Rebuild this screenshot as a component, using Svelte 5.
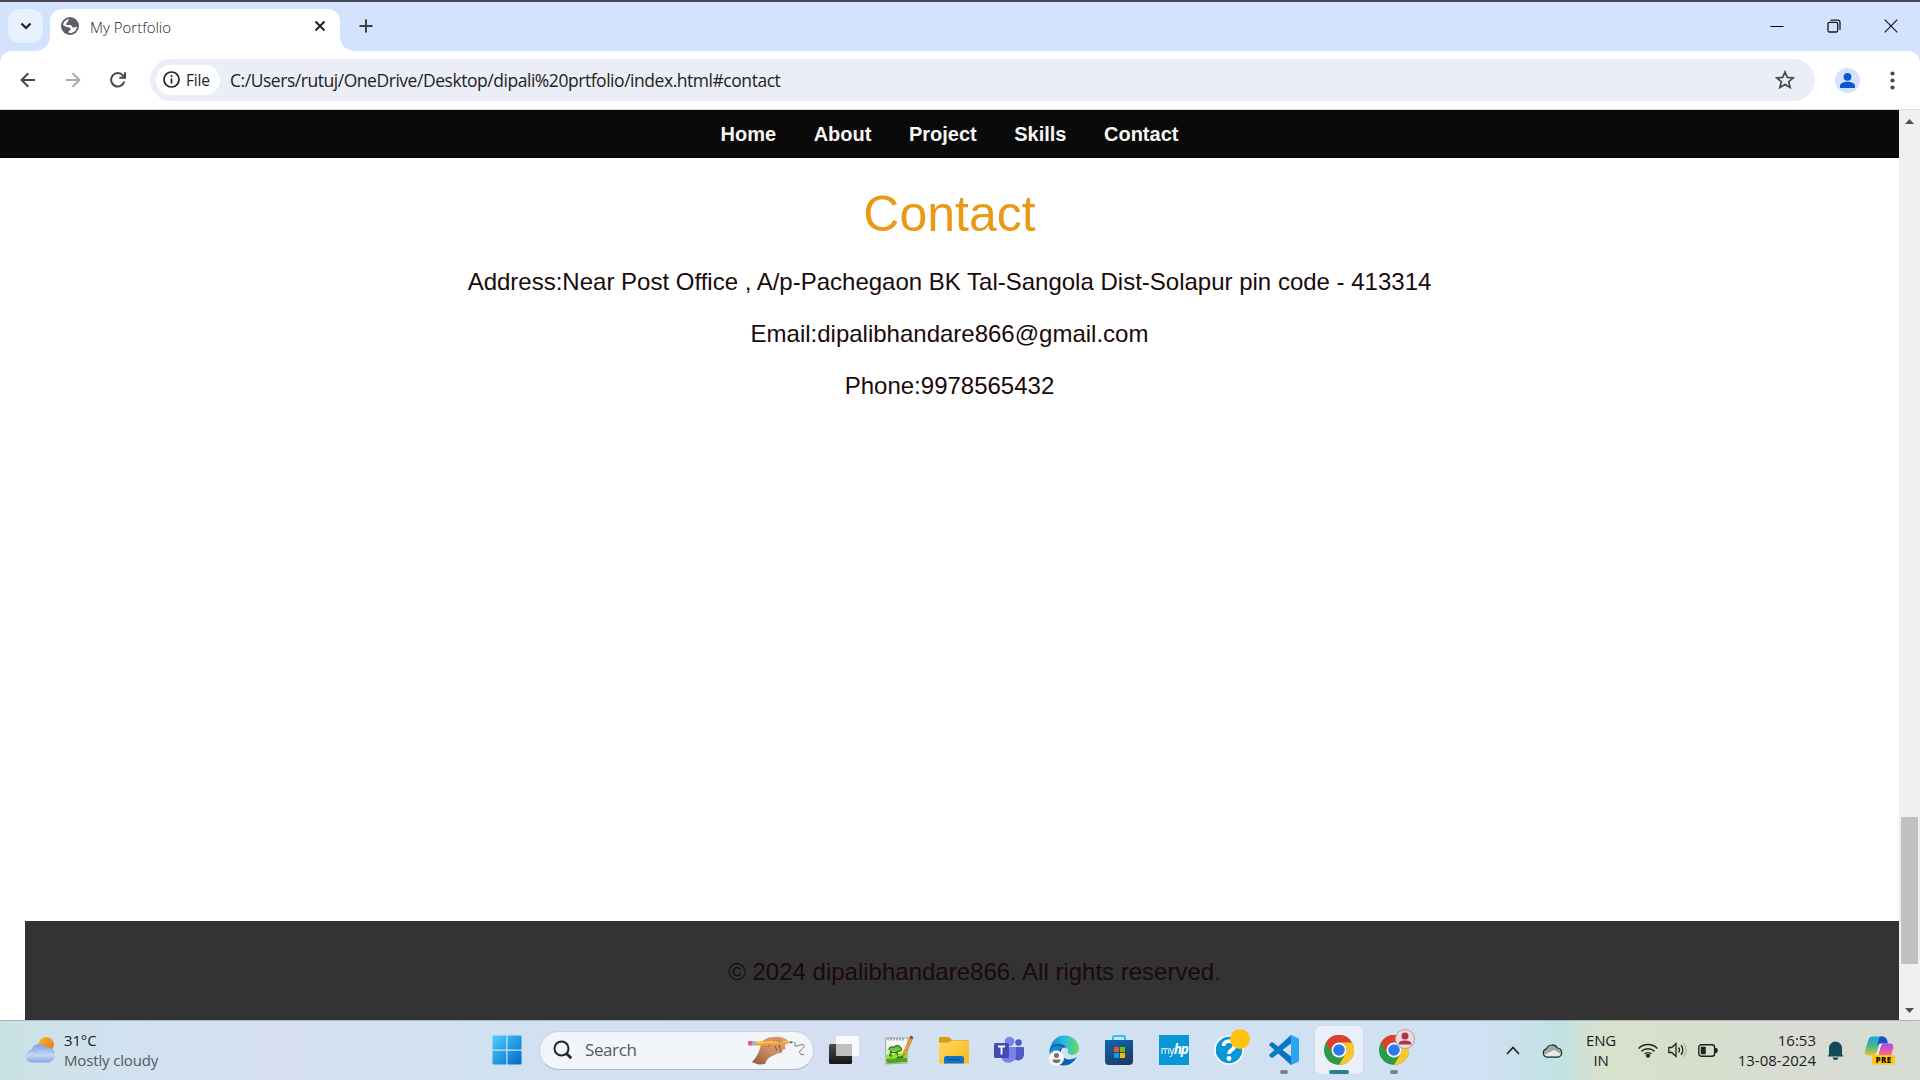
<script>
  const links = ['Home', 'About', 'Project', 'Skills', 'Contact'];
  const details = [
    'Address:Near Post Office , A/p-Pachegaon BK Tal-Sangola Dist-Solapur pin code - 413314',
    'Email:dipalibhandare866@gmail.com',
    'Phone:9978565432'
  ];
</script>

{#snippet chrome()}
  <circle cx="15" cy="15" r="15" fill="#2c9b48" />
  <path d="M2 7.5A15 15 0 0 1 28 7.5H15A7.5 7.5 0 0 0 8.5 18.7Z" fill="#e33b2e" />
  <path d="M28 7.5A15 15 0 0 1 15 30L21.5 18.7A7.5 7.5 0 0 0 15 7.5Z" fill="#fcc62b" />
  <circle cx="15" cy="15" r="7.5" fill="#fff" />
  <circle cx="15" cy="15" r="5.8" fill="#2d78ea" />
{/snippet}

<div class="screen">
  <header class="tabs">
    <button class="drop" aria-label="Search tabs">
      <svg width="12" height="8" viewBox="0 0 12 8"><path d="M1.5 1.5 6 6l4.5-4.5" fill="none" stroke="#1d1f23" stroke-width="2.2" /></svg>
    </button>
    <div class="tab">
      <svg width="18" height="18" viewBox="0 0 18 18">
        <circle cx="9" cy="9" r="9" fill="#5b5e64" />
        <path d="M10.5 2C7.500 2 7 3 7 4.500S5 5.500 5 7c0 1.500 2.500.8 4.300 1 1.700.2 1.400 2.500 3 2.500s2-.6 3.700-.8c-.4 3.800-3.200 6.300-7 6.300-1 0-1.500-.4-1.300-1.500.2-1.200 1.900-.9 1.900-2.300 0-1.700-1.800-2-3.600-2.200C4.500 9.800 4 8.800 2.100 8.300 2.300 5 5.200 2 9 2z" fill="#fff" />
        <path d="M11 2.200c-.4 1.400-1.700 1.200-1.800 2.500-.1 1.400 2 1.500 3.200 1.300" fill="none" stroke="#5b5e64" />
      </svg>
      <span class="title">My Portfolio</span>
      <svg width="12" height="12" viewBox="0 0 12 12"><path d="M1.500 1.500l9 9m0-9-9 9" stroke="#1f2124" stroke-width="2" /></svg>
    </div>
    <svg class="plus" width="14" height="14" viewBox="0 0 14 14"><path d="M7 .5v13M.5 7h13" stroke="#3c4043" stroke-width="2" /></svg>
    <div class="window">
      <svg width="14" height="14" viewBox="0 0 14 14"><path d="M.5 7.500h13" stroke="#000" stroke-width="1" /></svg>
      <svg width="14" height="14" viewBox="0 0 14 14" fill="none" stroke="#16181d" stroke-width="1.300"><rect x="1" y="3.300" width="9.700" height="9.700" rx="1.500" /><path d="M3.500 1.100h7.200a2.300 2.300 0 0 1 2.300 2.300v7.400" /></svg>
      <svg width="14" height="14" viewBox="0 0 14 14"><path d="M.7.7l12.600 12.600m0-12.600L.7 13.300" stroke="#16181d" stroke-width="1.200" /></svg>
    </div>
  </header>

  <div class="toolbar">
    <svg width="16" height="16" viewBox="0 0 16 16" fill="none" stroke="#47494d" stroke-width="2"><path d="M15 8H2M8.300 1.300 1.600 8l6.700 6.700" /></svg>
    <svg width="16" height="16" viewBox="0 0 16 16" fill="none" stroke="#aaacaf" stroke-width="2"><path d="M1 8h13M7.700 1.300 14.400 8l-6.700 6.700" /></svg>
    <svg width="16" height="16" viewBox="0 0 16 16" fill="none" stroke="#47494d" stroke-width="2"><path d="M14.300 9.500A6.700 6.700 0 1 1 13 3.500L14.500 5M15 .3v5.500H9.300" /></svg>
    <div class="omnibox">
      <div class="chip">
        <svg width="17" height="17" viewBox="0 0 17 17"><circle cx="8.500" cy="8.500" r="7.500" fill="none" stroke="#1f2124" stroke-width="1.700" /><path d="M8.500 7.400v5M8.500 4.300v1.800" stroke="#1f2124" stroke-width="1.700" /></svg>
        <span>File</span>
      </div>
      <span class="url">C:/Users/rutuj/OneDrive/Desktop/dipali%20prtfolio/index.html#contact</span>
      <svg width="20" height="20" viewBox="0 0 20 20"><path d="M10 2l2.300 5.400 5.900.5-4.500 3.800 1.400 5.800-5.100-3.100-5.100 3.100 1.400-5.800L1.800 7.900l5.900-.5z" fill="none" stroke="#47494d" stroke-width="1.700" /></svg>
    </div>
    <svg class="avatar" width="25" height="25" viewBox="0 0 25 25"><circle cx="12.500" cy="12.500" r="12.500" fill="#d3e3fd" /><circle cx="12.500" cy="8.800" r="3.900" fill="#0b57d0" /><path d="M5 20v-2c0-3 4.500-4.200 7.500-4.200S20 15 20 18v2z" fill="#0b57d0" /></svg>
    <svg width="5" height="19" viewBox="0 0 5 19" fill="#47494d"><circle cx="2.500" cy="2.500" r="2.100" /><circle cx="2.500" cy="9.500" r="2.100" /><circle cx="2.500" cy="16.500" r="2.100" /></svg>
  </div>

  <div class="viewport">
    <main>
      <nav>
        {#each links as link}<a href="#{link.toLowerCase()}">{link}</a>{/each}
      </nav>
      <section>
        <h1>Contact</h1>
        {#each details as line}<p>{line}</p>{/each}
      </section>
      <footer>© 2024 dipalibhandare866. All rights reserved.</footer>
    </main>
    <div class="scroll">
      <svg width="9" height="5" viewBox="0 0 9 5"><path d="M0 5 4.500 0 9 5z" fill="#505050" /></svg>
      <div class="thumb"></div>
      <svg width="9" height="5" viewBox="0 0 9 5"><path d="M0 0l4.500 5L9 0z" fill="#505050" /></svg>
    </div>
  </div>

  <div class="taskbar">
    <div class="weather">
      <svg width="30" height="26" viewBox="0 0 30 26">
        <defs>
          <linearGradient id="sun" x2="1" y2="1"><stop stop-color="#efbd24" /><stop offset="1" stop-color="#f26a11" /></linearGradient>
          <linearGradient id="cl" x2="0" y2="1"><stop stop-color="#7f9fe6" /><stop offset=".6" stop-color="#c5d8f6" /><stop offset="1" stop-color="#86a8ea" /></linearGradient>
        </defs>
        <circle cx="21.300" cy="7.600" r="7.600" fill="url(#sun)" />
        <path d="M7 25.500a6 6 0 0 1-1-12A8.500 8.500 0 0 1 21 10.500a7.300 7.300 0 0 1 3 15z" fill="url(#cl)" />
        <path d="M3 15c3-3 7-2 9 1m6-4c4-3 10-1 11 4" fill="none" stroke="#86a3e5" stroke-width="1" opacity=".7" />
      </svg>
      <div><span>31°C</span><span class="dim">Mostly cloudy</span></div>
    </div>

    <div class="apps">
      <div class="app start">
        <svg width="30" height="30" viewBox="0 0 30 30">
          <defs><linearGradient id="win" x2="1" y2="1"><stop stop-color="#4ecffd" /><stop offset="1" stop-color="#0069cb" /></linearGradient></defs>
          <path d="M1.500.5H14.300v14H.5V1.500a1 1 0 0 1 1-1zM15.500.5h13a1 1 0 0 1 1 1v13h-14zM.5 15.700h13.800v13.800H1.500a1 1 0 0 1-1-1zM15.500 15.700h14v12.800a1 1 0 0 1-1 1h-13z" fill="url(#win)" />
        </svg>
      </div>
      <div class="search">
        <svg width="20" height="20" viewBox="0 0 20 20" fill="none" stroke="#222428"><circle cx="8.500" cy="8.500" r="7" stroke-width="2" /><path d="M13.500 13.500l4.700 4.700" stroke-width="2.800" /></svg>
        <span>Search</span>
        <svg width="58" height="32" viewBox="0 0 58 32">
          <defs><linearGradient id="skin" x1="1" x2="0" y2="1"><stop stop-color="#e2a57a" /><stop offset=".55" stop-color="#c88a62" /><stop offset="1" stop-color="#8f5638" /></linearGradient></defs>
          <path d="M4 28C9 23 11 18 13 11c1.500-5 6-8 13-8 6-1 12 1 14 4l-3 4 .5 4-3 1-1 3-4 .5-4 2c-5 2-7 4-8 8-4 2-9 1-13.500-1.500z" fill="url(#skin)" />
          <path d="M20 12c4-3 9-3 12-1m-3 6-2-5m6 6-2-7" fill="none" stroke="#8a5638" stroke-width="1" />
          <path d="M7 7.500 38 6.500v4L7 11.500z" fill="#f2a72c" /><path d="M7 8.800l31-1.200" stroke="#ffd05f" />
          <path d="M0 8q0-1 1-1h3v4.500H1q-1 0-1-1z" fill="#d26478" /><path d="M4 7h3.500v4.500H4z" fill="#9fb0c9" />
          <path d="M38 6.500l6.500 1.500-6.500 2.500z" fill="#e7b47d" /><path d="M42 7.500l3.500.6-3.300 1.200z" fill="#333" />
          <path d="M25 5c4-2 8-1 10 2l-2 2c-3-1-5-2-8-1z" fill="#cf8f65" />
          <path d="M46 8c3 2-1 4 2 4s7-3 8-.5-6 5-4 8c1 1.500 3 1.500 4 .5" fill="none" stroke="#666b73" stroke-width="1" />
        </svg>
      </div>
      <div class="app">
        <svg width="32" height="30" viewBox="0 0 32 30"><defs><linearGradient id="dk" x2="0" y2="1"><stop stop-color="#4b4b4b" /><stop offset="1" stop-color="#161616" /></linearGradient></defs><rect x="1" y="9" width="23" height="20" rx="1.500" fill="url(#dk)" /><rect x="8" y="1" width="23" height="20" rx="1.500" fill="#fff" opacity=".82" /><path d="M8 9h16v12H9.500A1.500 1.500 0 0 1 8 19.500z" fill="#b8b8b8" opacity=".8" /></svg>
      </div>
      <div class="app">
        <svg width="30" height="30" viewBox="0 0 30 30">
          <path d="M1.500 3H24l-1 25-21 1z" fill="#f3f4f3" stroke="#909692" stroke-width=".8" /><path d="M2.500 14q8-4 15-1l6 4-.5 5-20.500 1z" fill="#d9f5a0" /><path d="M2 20l21.500-2-.5 5-20.500 1.500z" fill="#92dc2c" /><path d="M2 24l21-1v4l-20 1.500z" fill="#4ba51d" />
          <path d="M4 3v2.500M7 3v2.500M10 3v2.500M13 3v2.500M16 3v2.500M19 3v2.500" stroke="#8a8a8a" stroke-width="1.200" />
          <path d="M5 15c0-3 3-4 5-2.500 2-3 6-2 6 0 2 0 2 2.500 0 3.500l-4 1c2 1 2 3 1 3M8 17c-3 1-3 4 0 4m-2-5c2 2 6 2 9 0" fill="#79c142" stroke="#266e17" stroke-width="1.200" />
          <path d="M13 24c2-4 2-1 3-1s2-3 3 0" fill="none" stroke="#245f1b" stroke-width="1.300" />
          <path d="M26 2.500l2.500 1.500-7 15-2.500 2 .3-3.300z" fill="#e9a838" stroke="#a86c22" stroke-width=".6" /><path d="M26.500.5l3 1.500-1.300 2.500-3-1.500z" fill="#8b4b40" />
        </svg>
      </div>
      <div class="app">
        <svg width="30" height="30" viewBox="0 0 30 30"><defs><linearGradient id="fold" x2="1" y2="1"><stop stop-color="#ffd869" /><stop offset="1" stop-color="#f9b915" /></linearGradient></defs><path d="M0 3.500Q0 2 1.500 2H9q1 0 2 1l2 2h15.500Q30 5 30 6.500V20H0z" fill="#dc9a0a" /><path d="M0 7.500h9.500l3-2h16Q30 5.500 30 7v20q0 1.500-1.500 1.500h-27Q0 28.500 0 27z" fill="url(#fold)" /><path d="M5 28.500v-5Q5 21 7.500 21h15q2.500 0 2.500 2.500v5z" fill="#0c75c7" /><path d="M9 24.700h12" stroke="#084f91" stroke-width="1.200" stroke-linecap="round" /></svg>
      </div>
      <div class="app">
        <svg width="30" height="28" viewBox="0 0 30 28"><circle cx="15.500" cy="5.500" r="4.800" fill="#7b83eb" /><circle cx="24.500" cy="6.500" r="3.300" fill="#5059c9" /><path d="M18 11h11q1 0 1 1v7a5.800 5.800 0 0 1-9 4.500z" fill="#5059c9" /><path d="M8 11h14v8.500a7.500 7.500 0 0 1-14 3.500z" fill="#7b83eb" /><rect y="7" width="15" height="15" rx="1.500" fill="#454bb0" /><path d="M4 10.500h7M7.500 10.500v8" stroke="#fff" stroke-width="1.800" /></svg>
      </div>
      <div class="app">
        <svg width="30" height="31" viewBox="0 0 30 31">
          <defs><linearGradient id="edge"><stop stop-color="#1680d3" /><stop offset=".45" stop-color="#28b9e5" /><stop offset="1" stop-color="#67dd58" /></linearGradient></defs>
          <path d="M1 14C3 5 8 .5 15.500.5 24 .5 30 7 30 13.500c0 5-5 7-9 6-3-1-2-3-2-5-1-4-7-6-11-5C4 10 2 12 1 14z" fill="url(#edge)" /><path d="M.5 17C0 11 6 8 11 9c5 0 7 4 7 5-4-4-8 1-5 6 3 6 10 5 15 2-3 5-8 8.500-13 8.500C7 30.500 1 25 .5 17z" fill="#0e63af" /><path d="M1 15c3-5 11-5 14-2-5-1-7 4-4 9l-5 5c-3-3-5-7-5-12z" fill="#1789d7" /><circle cx="7.500" cy="23" r="7.500" fill="#f7f7f7" /><circle cx="7.500" cy="20.500" r="2.500" fill="#707070" /><path d="M3.500 24.500h8q0 3.500-4 3.500t-4-3.500z" fill="#707070" />
        </svg>
      </div>
      <div class="app">
        <svg width="28" height="30" viewBox="0 0 28 30"><defs><linearGradient id="store" x2=".5" y2="1"><stop stop-color="#0c68b7" /><stop offset="1" stop-color="#1d3d68" /></linearGradient></defs><path d="M8 6V2.500Q8 1 9.500 1h9Q20 1 20 2.500V6" fill="none" stroke="#29c3f2" stroke-width="2" /><path d="M0 5h28v21q0 4-4 4H4q-4 0-4-4z" fill="url(#store)" /><path d="M9 12h5v5H9z" fill="#f25022" /><path d="M15 12h5v5h-5z" fill="#7fba00" /><path d="M9 18h5v5H9z" fill="#00a4ef" /><path d="M15 18h5v5h-5z" fill="#ffb900" /></svg>
      </div>
      <div class="app"><div class="hp">my<b>hp</b></div></div>
      <div class="app">
        <svg class="help" width="36" height="37" viewBox="0 0 36 37"><circle cx="15" cy="21" r="14" fill="#0796d6" stroke="#fff" stroke-width="1.500" /><path d="M9.500 17c0-6.500 11-6.500 11 0 0 4-5.500 3.500-5.500 8" fill="none" stroke="#fff" stroke-width="3.800" /><circle cx="15" cy="29.500" r="2.400" fill="#fff" /><circle cx="26" cy="10" r="10" fill="#ffc20d" /></svg>
      </div>
      <div class="app">
        <svg width="30" height="30" viewBox="0 0 30 30"><path d="M2 7.500.5 9q-.7 1 0 1.500L22 30V21.500L4 7.500q-1-.7-2 0z" fill="#0b73bc" /><path d="M2 22.500.5 21q-.7-1 0-1.500L22 0v8.500L4 22.500q-1 .7-2 0z" fill="#0879c5" /><path d="M22 0l7 3q1 .5 1 1.500v21q0 1-1 1.500l-7 3q-.5 0-1.500-1 1.500 1 1.500-1V2q0-2-1.500-1 1-1 1.500-1z" fill="#29a5f3" /></svg>
        <i></i>
      </div>
      <div class="app active">
        <svg width="30" height="30" viewBox="0 0 30 30">{@render chrome()}</svg>
        <i></i>
      </div>
      <div class="app">
        <svg class="profile" width="36" height="36" viewBox="0 0 36 36"><g transform="translate(0 6)">{@render chrome()}</g><circle cx="26" cy="10" r="9.500" fill="#f1dadc" stroke="#a9a2a5" /><circle cx="26" cy="7" r="3.500" fill="#a83645" /><path d="M19.500 15.500q0-4 6.500-4t6.500 4z" fill="#a83645" /></svg>
        <i></i>
      </div>
    </div>

    <div class="tray">
      <svg class="up" width="14" height="9" viewBox="0 0 14 9"><path d="M1 8l6-6.500L13 8" fill="none" stroke="#1c1e20" stroke-width="1.600" /></svg>
      <svg class="cloud" width="21" height="15" viewBox="0 0 21 15"><path d="M5 13.500a4 4 0 0 1-.5-8A6 6 0 0 1 15 4.500a4.700 4.700 0 0 1 1.500 9z" fill="#a6a6a6" /><path d="M2 12l10-5 7 4-2 2.500H4z" fill="#e9e9e9" /><path d="M5 14.200a4.300 4.300 0 0 1-.5-8.400A6 6 0 0 1 15.300 5a4.700 4.700 0 0 1 1 9.200z" fill="none" stroke="#292b2c" stroke-width="1.200" /></svg>
      <div class="lang"><span>ENG</span><span>IN</span></div>
      <svg class="wifi" width="20" height="15" viewBox="0 0 20 15" fill="none" stroke="#222" stroke-width="1.500"><path d="M.7 5.500a13 13 0 0 1 18.600 0M3.500 8.300a9.300 9.300 0 0 1 13 0M6.500 11a5.200 5.200 0 0 1 7 0" /><circle cx="10" cy="12.800" r="1.300" fill="#222" /></svg>
      <svg class="sound" width="20" height="16" viewBox="0 0 20 16" fill="none" stroke="#222" stroke-width="1.300"><path d="M.8 5.500h3L8 1.500v13l-4.200-4h-3zM10.500 5.500a4 4 0 0 1 0 5M13 3.300a7 7 0 0 1 0 9.400" /><path d="M15.500 1.200a10 10 0 0 1 0 13.600" stroke="#b0b6aa" /></svg>
      <svg class="battery" width="20" height="13" viewBox="0 0 20 13"><rect x=".8" y=".8" width="15.800" height="11.400" rx="2.500" fill="none" stroke="#222" stroke-width="1.400" /><rect x="2.800" y="2.800" width="5" height="7.400" rx=".8" fill="#222" /><path d="M17 4h1.500q1.300.5 1.300 2.500T18.500 9H17z" fill="#222" /></svg>
      <div class="clock"><span>16:53</span><span>13-08-2024</span></div>
      <svg class="bell" width="17" height="19" viewBox="0 0 17 19" fill="#134b5d"><path d="M2 13.500V7a6.500 6.500 0 0 1 13 0v6.500l1.500 2H.5zM5.500 16.500h6q-.5 2.500-3 2.500t-3-2.500z" /></svg>
      <svg class="copilot" width="30" height="29" viewBox="0 0 30 29">
        <defs><linearGradient id="ca" x2="0" y2="1"><stop stop-color="#1aa2e8" /><stop offset=".55" stop-color="#52b883" /><stop offset="1" stop-color="#eec530" /></linearGradient><linearGradient id="cb" x2="0" y2="1"><stop stop-color="#a64df0" /><stop offset=".5" stop-color="#ec5b9c" /><stop offset="1" stop-color="#ff9a4e" /></linearGradient></defs>
        <path d="M7 .5h11q-2.500 2-4 8l-2 7q-1 4-4 4H3q-4 0-3-5L3.500 3.500Q4.500.5 7 .5z" fill="url(#ca)" /><path d="M15 .5h2.500Q21 .5 22 4l1 3.500h-7q-3 0-4 3L13.500 4z" fill="#1b4fc7" /><path d="M17 7.500h8q4 0 3 5l-2.500 9q-1 3-4 3H9q3-.5 4-4l2-8q1-5 2-5z" fill="url(#cb)" />
        <path d="M14.500 9.500q1-2 3-2-2 2-3 7l-1.500 5h-3q2-1 2.500-4z" fill="#eef0f4" />
        <rect x="7" y="19" width="23" height="9.500" rx="2.500" fill="#ffc70b" /><text x="18.500" y="26.800" text-anchor="middle">PRE</text>
      </svg>
    </div>
  </div>
</div>

<style>
  :global(body) { margin: 0; overflow: hidden; }
  * { box-sizing: border-box; }
  svg { display: block; flex: none; }
  .screen { width: 1920px; height: 1080px; display: flex; flex-direction: column; overflow: hidden; font-family: 'Open Sans', 'Noto Sans', sans-serif; background: #d3e3fd; }

  .tabs { height: 51px; flex: none; border-top: 2px solid #464750; background: #d3e3fd; display: flex; padding: 7px 7px 0 8px; }
  .drop { width: 35px; height: 34px; padding: 0; border: 0; border-radius: 12px; background: #e9f1fe; display: grid; place-items: center; }
  .tab { width: 290px; height: 42px; margin-left: 7px; padding: 0 14px 8px 11px; background: #fff; border-radius: 12px 12px 0 0; display: flex; align-items: center; position: relative; }
  .tab::before, .tab::after { content: ''; position: absolute; bottom: 0; width: 14px; height: 14px; }
  .tab::before { left: -14px; background: radial-gradient(circle at 0 0, transparent 13.500px, #fff 14px); }
  .tab::after { right: -14px; background: radial-gradient(circle at 100% 0, transparent 13.500px, #fff 14px); }
  .title { margin: 0 auto 0 11px; padding-top: 2px; font-size: 15px; font-weight: 300; letter-spacing: 0; color: #1f2124; line-height: 20px; }
  .plus { margin: 10px 0 0 19px; }
  .window { margin: 10px 15px 0 auto; display: flex; gap: 43px; }

  .toolbar { height: 59px; flex: none; background: #fff; border-radius: 12px 12px 0 0; border-bottom: 1px solid #dcdddf; display: flex; align-items: center; padding: 0 25px 0 20px; }
  .toolbar > svg + svg { margin-left: 29px; }
  .omnibox { flex: 1; height: 42px; margin-left: 24px; border-radius: 21px; background: #ebeef7; padding: 0 20px 0 6px; display: flex; align-items: center; color: #1f2124; }
  .chip { width: 64px; height: 30px; border-radius: 15px; background: #fff; display: flex; align-items: center; gap: 6px; padding: 0 0 1px 7px; font-size: 15.500px; letter-spacing: -0.2px; }
  .url { flex: 1; margin-left: 10px; font-size: 17.500px; letter-spacing: -0.46px; white-space: nowrap; }
  .avatar { margin-left: 20px; }
  .toolbar > .avatar + svg { margin-left: 30px; }

  .viewport { height: 910px; flex: none; display: flex; background: #fff; }
  main { width: 1899px; display: flex; flex-direction: column; font-family: 'Liberation Sans', Arial, sans-serif; color: #1a0a0a; }
  nav { height: 48px; background: #0a0a0a; display: flex; justify-content: center; align-items: center; gap: 37.500px; border-bottom: 1px solid #000; }
  nav a { color: #f8f5f5; font-weight: 700; font-size: 20px; line-height: 24px; text-decoration: none; }
  section { flex: 1; text-align: center; padding-top: 27px; }
  h1 { margin: 0; color: #e99a14; font-weight: 400; font-size: 50px; line-height: 58px; }
  p { margin: 0 0 25px; font-size: 24px; line-height: 27px; }
  h1 + p { margin-top: 25px; }
  footer { height: 99px; margin-left: 25px; padding: 37px 0 0 25px; background: #333; color: #1a0a0a; text-align: center; font-size: 24px; line-height: 28px; }
  .scroll { width: 21px; background: #f0f0f0; display: flex; flex-direction: column; align-items: center; padding: 9px 0 7px; }
  .thumb { width: 17px; height: 147px; margin: 693px 0 auto; background: #c1c1c1; }

  .taskbar { height: 60px; flex: none; display: flex; align-items: center; padding-bottom: 1px; border-top: 1px solid #a9b4bd; background: linear-gradient(90deg, #c9e2e1 0, #cfe2ea 60px, #d1e1f1 130px, #d7e0f3 280px, #d0e1f2 480px, #d5dff2 820px, #d2e2f1 1000px, #d0e1f3 1480px, #c1e2e3 1560px, #d7e2cc 1600px, #d6dfcb 1700px, #d8dcd3 1780px, #d7dcd4 1920px); color: #1b1d1f; font-size: 15px; line-height: 20px; }
  .taskbar span { display: block; white-space: nowrap; }
  .weather { width: 483px; padding-left: 25px; display: flex; align-items: center; gap: 9px; letter-spacing: -0.15px; }
  .weather div { padding-bottom: 1px; }
  .dim { color: #54595e; }
  .apps { display: flex; align-items: center; }
  .app { width: 48px; height: 48px; margin-right: 7px; display: grid; place-items: center; position: relative; border-radius: 5px; }
  .start { margin-right: 8px; }
  .search { width: 275px; height: 39px; margin-right: 6px; border-radius: 20px; background: #f2f6fb; border: 1px solid #c5d2e2; border-bottom-color: #a9b7c8; display: flex; align-items: center; padding: 0 7px 0 13px; font-size: 17px; color: #555a60; }
  .search span { margin: 0 auto 0 12px; letter-spacing: -0.4px; }
  .active { background: #e9f0fa; box-shadow: 0 0 1px #a7b4c6; }
  .app i { position: absolute; bottom: 0; left: 20px; width: 8px; height: 4px; border-radius: 2px; background: #7a828b; }
  .active i { left: 14px; width: 20px; background: #25818f; }
  .help { position: relative; left: 3px; top: -3px; }
  .profile { position: relative; left: 3px; top: -3px; }
  .hp { width: 30px; height: 30px; background: #0796d6; color: #fff; font: 10px/28px 'Open Sans', sans-serif; letter-spacing: -0.5px; text-align: center; }
  .hp b { font-size: 13.500px; font-style: italic; letter-spacing: -1.3px; }

  .tray { flex: 1; display: flex; align-items: center; padding-left: 81px; font-size: 15px; }
  .cloud { margin-left: 22px; }
  .lang { width: 40px; margin-left: 18px; text-align: center; letter-spacing: -0.2px; }
  .wifi { margin-left: 17px; }
  .sound { margin-left: 10px; }
  .battery { margin-left: 10px; }
  .clock { width: 98px; text-align: right; letter-spacing: 0; }
  .lang, .clock { padding-bottom: 1px; }
  .bell { margin-left: 11px; }
  .copilot { margin-left: 21px; }
  .copilot text { font: 800 8px 'Open Sans', sans-serif; letter-spacing: 0.4px; fill: #17120a; }
</style>
